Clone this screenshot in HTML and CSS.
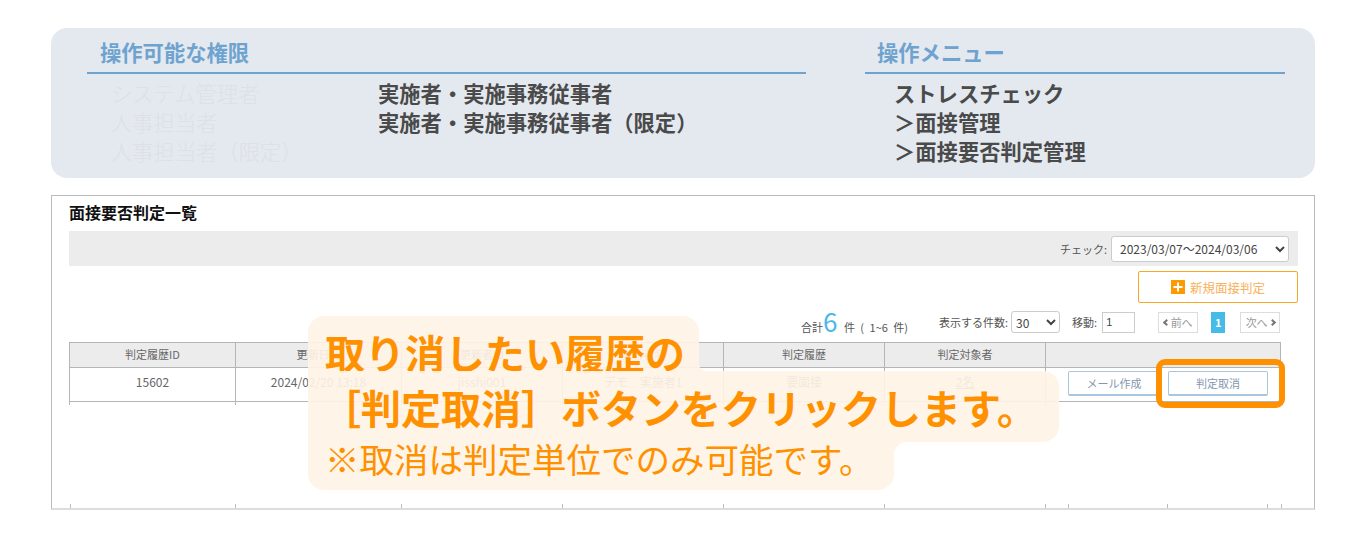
FILE: index.html
```html
<html>
  <head>
    <title>面接要否判定一覧</title>
    <meta charset="utf-8">
    <link rel="stylesheet" href="styles.css">
  </head>
  <body>
    <section class="perm">
      <div class="perm-left">
        <h2>操作可能な権限</h2>
        <div class="perm-rows">
          <div class="roles">
            <div>システム管理者</div>
            <div>人事担当者</div>
            <div>人事担当者（限定）</div>
          </div>
          <div class="grants">
            <div>実施者・実施事務従事者</div>
            <div>実施者・実施事務従事者（限定）</div>
          </div>
        </div>
      </div>
      <div class="perm-right">
        <h2>操作メニュー</h2>
        <div class="menu">
          <div>ストレスチェック</div>
          <div>＞面接管理</div>
          <div>＞面接要否判定管理</div>
        </div>
      </div>
    </section>

    <section class="card">
      <h3>面接要否判定一覧</h3>
      <div class="filter">
        <label>チェック:</label>
        <select class="period"><option>2023/03/07～2024/03/06</option></select>
      </div>
      <div class="actions">
        <a class="new-btn">
          <svg width="14" height="14" viewBox="0 0 14 14">
            <rect width="14" height="14" fill="#f90" />
            <path d="M7 2.5V11.5M2.5 7H11.5" stroke="#fff" stroke-width="2" />
          </svg>
          新規面接判定
        </a>
      </div>
      <div class="pager">
        <span class="total">合計<b>6</b> 件 ( 1~6 件)</span>
        <span class="per-page">表示する件数:</span>
        <select class="count"><option>30</option></select>
        <span class="jump">移動:</span>
        <input class="jump-input" value="1">
        <a class="page-btn prev"><i class="arrow left"></i>前へ</a>
        <span class="page-now">1</span>
        <a class="page-btn next">次へ<i class="arrow right"></i></a>
      </div>
      <table>
        <tr>
          <th class="c1">判定履歴ID</th>
          <th class="c2">更新日時</th>
          <th class="c3">更新者ID</th>
          <th class="c4">更新者名</th>
          <th class="c5">判定履歴</th>
          <th class="c6">判定対象者</th>
          <th class="c7"></th>
        </tr>
        <tr>
          <td>15602</td>
          <td>2024/02/20 13:18</td>
          <td>jisshi001</td>
          <td>デモ　実施者1</td>
          <td>要面接</td>
          <td><u>2名</u></td>
          <td>
            <div class="btns">
              <a class="row-btn mail">メール作成</a>
              <a class="row-btn cancel">判定取消</a>
            </div>
          </td>
        </tr>
      </table>
      <div class="ticks">
        <i class="t0"></i><i class="t1"></i><i class="t2"></i><i class="t2"></i><i class="t2"></i><i class="t2"></i><i class="t3"></i><i class="t4"></i><i class="t5"></i><i class="t6"></i><i></i>
      </div>
    </section>

    <div class="note">
      <div class="note-line l1">取り消したい履歴の</div>
      <div class="note-line l2">［判定取消］ボタンをクリックします。</div>
      <div class="note-line l3">※取消は判定単位でのみ可能です。</div>
    </div>
    <div class="focus"></div>
  </body>
</html>
```
FILE: styles.css
```css
* {
  box-sizing: border-box;
}
body {
  margin: 0;
  background: #fff;
  font-family: "Noto Sans CJK JP", "Noto Sans", sans-serif;
  color: #555;
}

.perm {
  display: flex;
  justify-content: space-between;
  width: 1264px;
  height: 150px;
  margin: 28px 0 0 51px;
  padding: 0 30px 0 36px;
  background: #e4e9f0;
  border-radius: 16px;
}
.perm-left {
  width: 719px;
}
.perm-right {
  width: 420px;
}
.perm h2 {
  height: 46px;
  margin: 0;
  padding: 8px 0 0 13px;
  font-size: 21.3px;
  line-height: 31px;
  font-weight: 700;
  color: #6fa3cf;
  border-bottom: 2px solid #6fa3cf;
}
.perm-right h2 {
  padding-left: 12px;
}
.perm-rows {
  display: flex;
  padding: 4px 0 0 24px;
  font-size: 21.3px;
  line-height: 29px;
}
.roles {
  width: 267px;
  color: #dde0e4;
  font-weight: 300;
}
.grants, .menu {
  font-weight: 700;
  color: #4a4a4a;
}
.menu {
  padding: 4px 0 0 29px;
  font-size: 21.3px;
  line-height: 29px;
}

.card {
  width: 1264px;
  height: 315px;
  margin: 17px 0 0 51px;
  padding: 0 16px 0 17px;
  border: 1px solid #bbb;
  border-bottom-width: 2px;
  border-bottom-color: #ddd;
  position: relative;
}
.card h3 {
  height: 35px;
  margin: 0;
  padding-top: 6px;
  font-size: 16px;
  line-height: 20px;
  font-weight: 700;
  color: #111;
}
.filter {
  display: flex;
  align-items: center;
  justify-content: flex-end;
  gap: 4px;
  height: 35px;
  padding-right: 9px;
  background: #ececec;
  font-size: 11px;
}
select {
  font-family: "Noto Sans CJK JP", "Noto Sans", sans-serif;
  font-size: 12px;
  color: #444;
  background: #fff;
  border: 1px solid #ccc;
  border-radius: 3px;
}
.period {
  width: 178px;
  height: 26px;
  padding-left: 4px;
}
.actions {
  display: flex;
  justify-content: flex-end;
  padding-top: 5px;
}
.new-btn {
  display: flex;
  align-items: center;
  justify-content: center;
  gap: 5px;
  width: 160px;
  height: 32px;
  font-size: 12.5px;
  color: #f9b05a;
  border: 1px solid #f9a825;
  border-radius: 2px;
}
.pager {
  display: flex;
  align-items: center;
  height: 22px;
  margin-top: 8px;
  padding-left: 732px;
  font-size: 11px;
  color: #555;
}
.total {
  width: 138px;
  white-space: nowrap;
  word-spacing: 3px;
}
.total b {
  font-size: 26px;
  line-height: 22px;
  font-weight: 400;
  color: #4bb8e8;
  margin: 0 1px 0 0;
}
.per-page {
  margin-right: 3px;
}
.count {
  width: 49px;
  height: 22px;
  margin-right: 12px;
}
.jump {
  margin-right: 5px;
}
.jump-input {
  width: 33px;
  height: 21px;
  padding: 0 3px;
  margin-right: 23px;
  font-size: 11px;
  color: #444;
  border: 1px solid #ccc;
}
.page-btn {
  display: flex;
  align-items: center;
  justify-content: center;
  gap: 2px;
  width: 40px;
  height: 21px;
  color: #999;
  border: 1px solid #ddd;
}
.page-now {
  width: 14px;
  height: 21px;
  margin: 0 15px 0 13px;
  text-align: center;
  line-height: 21px;
  font-weight: 700;
  color: #fff;
  background: #45bbe8;
}
.arrow {
  width: 5px;
  height: 5px;
  border-top: 2px solid #777;
  border-left: 2px solid #777;
}
.arrow.left {
  transform: rotate(-45deg);
}
.arrow.right {
  transform: rotate(135deg);
}

table {
  width: 1212px;
  margin-top: 9px;
  border-collapse: collapse;
  table-layout: fixed;
  font-size: 11px;
}
th, td {
  border: 1px solid #b5b5b5;
  text-align: center;
  font-weight: 400;
  color: #666;
  padding: 0;
}
th {
  height: 25px;
  padding-bottom: 2px;
  background: #ececec;
}
td {
  position: relative;
  height: 33px;
  padding-bottom: 6px;
  font-size: 12px;
}
td::after {
  content: "";
  position: absolute;
  left: -1px;
  bottom: -4px;
  height: 3px;
  border-left: 1px solid #b5b5b5;
}
.c1, .c2 {
  width: 166px;
}
.c3, .c4, .c5, .c6 {
  width: 161px;
}
.btns {
  display: flex;
  gap: 8px;
  height: 27px;
  padding: 3px 0 0 22px;
}
.row-btn {
  display: block;
  height: 25px;
  font-size: 11px;
  line-height: 23px;
  color: #8497ae;
  background: #fff;
  border: 1px solid #a9c6e0;
  border-bottom-width: 2px;
  border-radius: 2px;
}
.mail {
  width: 92px;
}
.cancel {
  width: 100px;
}
.ticks {
  display: flex;
  position: absolute;
  left: 18px;
  bottom: 0;
  height: 4px;
}
.ticks i {
  border-left: 1px solid #bbb;
}
.t0 {
  width: 165px;
}
.t1 {
  width: 166px;
}
.t2 {
  width: 161px;
}
.t3 {
  width: 23px;
}
.t4 {
  width: 99px;
}
.t5 {
  width: 100px;
}
.t6 {
  width: 14px;
}

.note {
  position: absolute;
  left: 308px;
  top: 316px;
  display: flex;
  flex-direction: column;
  align-items: flex-start;
  color: #ff9100;
}
.note-line {
  position: relative;
  background: rgba(254, 243, 230, 0.92);
  white-space: nowrap;
}
.l1 {
  width: 391px;
  height: 55px;
  padding: 8px 0 0 17px;
  font-size: 40px;
  line-height: 56px;
  font-weight: 700;
  border-radius: 16px 16px 0 0;
}
.l1::after {
  content: "";
  position: absolute;
  left: 100%;
  bottom: 0;
  width: 8px;
  height: 8px;
  background: radial-gradient(circle at 100% 0, transparent 8px, rgba(254, 243, 230, 0.92) 8.5px);
}
.l2 {
  width: 751px;
  height: 71px;
  padding: 6px 0 0 13px;
  font-size: 40px;
  line-height: 60px;
  font-weight: 700;
  border-radius: 0 16px 16px 0;
}
.l3 {
  width: 586px;
  height: 48px;
  padding-left: 17px;
  font-size: 34.5px;
  line-height: 33px;
  border-radius: 0 0 16px 16px;
}
.l3::after {
  content: "";
  position: absolute;
  left: 100%;
  top: 0;
  width: 14px;
  height: 14px;
  background: radial-gradient(circle at 100% 100%, transparent 14px, rgba(254, 243, 230, 0.92) 14.5px);
}
.focus {
  position: absolute;
  left: 1156px;
  top: 359px;
  width: 129px;
  height: 49px;
  border: 6px solid #ff9100;
  border-radius: 9px;
}
```
